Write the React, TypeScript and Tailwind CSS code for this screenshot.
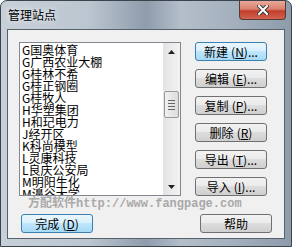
import React from 'react';

const sites = [
  'G国奥体育',
  'G广西农业大棚',
  'G桂林不希',
  'G桂正钢圈',
  'G桂牧人',
  'H华塑集团',
  'H和玘电力',
  'J经开区',
  'K科尚模型',
  'L灵康科技',
  'L良庆公安局',
  'M明阳生化',
  'M濞谷大学',
];

function WinButton({ label, hot, dots = true, wide }: { label: string; hot?: string; dots?: boolean; wide?: boolean }) {
  const [name, key] = label.split('|');
  return (
    <button
      className={`flex h-[19px] w-[72px] items-center justify-center rounded-[3px] border text-[12px] leading-none text-black ${
        hot
          ? 'border-[#3c7fb1] bg-[linear-gradient(#eaf6fd_0%,#d9f0fc_45%,#bee6fd_50%,#a7d9f5_100%)]'
          : 'border-[#707070] bg-[linear-gradient(#f2f2f2_0%,#ebebeb_45%,#dddddd_50%,#cfcfcf_100%)]'
      } ${wide ? 'w-[71px]' : ''}`}
    >
      <span>{name}</span>
      {key && (
        <span className="ml-[3px]">
          (<span className="underline">{key}</span>){dots ? '...' : ''}
        </span>
      )}
    </button>
  );
}

export default function App() {
  return (
    <div className="w-[292px] h-[247px] font-['Noto_Sans_CJK_SC',sans-serif] bg-white">
      <div className="flex h-full w-full flex-col rounded-t-[7px] border border-[#3b434c] bg-[linear-gradient(90deg,#c7d0d9_0%,#bcc6d0_30%,#8e9cac_50%,#b3bec9_62%,#a6b2bf_78%,#8d9bab_100%)]">
        {/* title bar */}
        <div className="flex h-[28px] shrink-0 items-start">
          <span className="ml-[7px] mt-[7px] text-[12px] leading-[14px] text-black [text-shadow:0_0_6px_#ffffff]">
            管理站点
          </span>
          <div className="ml-auto mr-[5px] flex h-[19px] w-[47px] items-center justify-center rounded-b-[4px] border border-t-0 border-[#5a3a36] bg-[linear-gradient(#e9a99b_0%,#d9816f_45%,#c23f2b_55%,#d0634f_100%)]">
            <svg width="12" height="10" viewBox="0 0 12 10">
              <path d="M2 1 L10 9 M10 1 L2 9" stroke="#3a3a3a" strokeWidth="4" strokeLinecap="square" />
              <path d="M2 1 L10 9 M10 1 L2 9" stroke="#ffffff" strokeWidth="2" strokeLinecap="square" />
            </svg>
          </div>
        </div>

        {/* client area */}
        <div className="mx-[6px] mb-[7px] flex flex-1 flex-col border border-[#56616c] bg-[#f0f0f0] px-[11px] pt-[12px]">
          <div className="flex">
            {/* list box */}
            <div className="flex h-[154px] w-[162px] border border-[#828790] bg-white">
              <div className="flex-1 overflow-hidden pl-[2px] pt-[1px]">
                {sites.map((s) => (
                  <div key={s} className="whitespace-nowrap text-[12px] leading-[12px] text-black">
                    {s}
                  </div>
                ))}
              </div>
              <div className="flex w-[17px] flex-col items-center bg-[linear-gradient(90deg,#e3e3e3,#f3f3f3)]">
                <div className="flex h-[17px] w-full items-center justify-center">
                  <svg width="7" height="4" viewBox="0 0 7 4">
                    <path d="M0 4 L3.5 0 L7 4 Z" fill="#222" />
                  </svg>
                </div>
                <div className="mt-[31px] flex h-[27px] w-[15px] flex-col items-center justify-center gap-[2px] rounded-[2px] border border-[#9a9a9a] bg-[linear-gradient(90deg,#f1f1f1,#dcdcdc)]">
                  <div className="h-px w-[7px] bg-[#666]" />
                  <div className="h-px w-[7px] bg-[#666]" />
                  <div className="h-px w-[7px] bg-[#666]" />
                  <div className="h-px w-[7px] bg-[#666]" />
                </div>
                <div className="mt-auto flex h-[17px] w-full items-center justify-center">
                  <svg width="7" height="4" viewBox="0 0 7 4">
                    <path d="M0 0 L3.5 4 L7 0 Z" fill="#222" />
                  </svg>
                </div>
              </div>
            </div>

            {/* buttons */}
            <div className="ml-[14px] flex flex-col gap-[8px]">
              <WinButton label="新建|N" hot="1" />
              <WinButton label="编辑|E" />
              <WinButton label="复制|P" />
              <WinButton label="删除|R" dots={false} />
              <WinButton label="导出|T" />
              <WinButton label="导入|I" />
            </div>
          </div>

          <div className="mt-[2px] ml-[9px] whitespace-nowrap font-['Liberation_Mono','Noto_Sans_CJK_SC',monospace] text-[12px] font-bold leading-[13px] text-[#a9a9a9]">
            方配软件http://www.fangpage.com
          </div>

          <div className="mt-[3px] flex justify-between pr-[1px]">
            <div className="ml-[2px]">
              <WinButton label="完成|D" hot="1" dots={false} wide />
            </div>
            <WinButton label="帮助" />
          </div>
        </div>
      </div>
    </div>
  );
}
